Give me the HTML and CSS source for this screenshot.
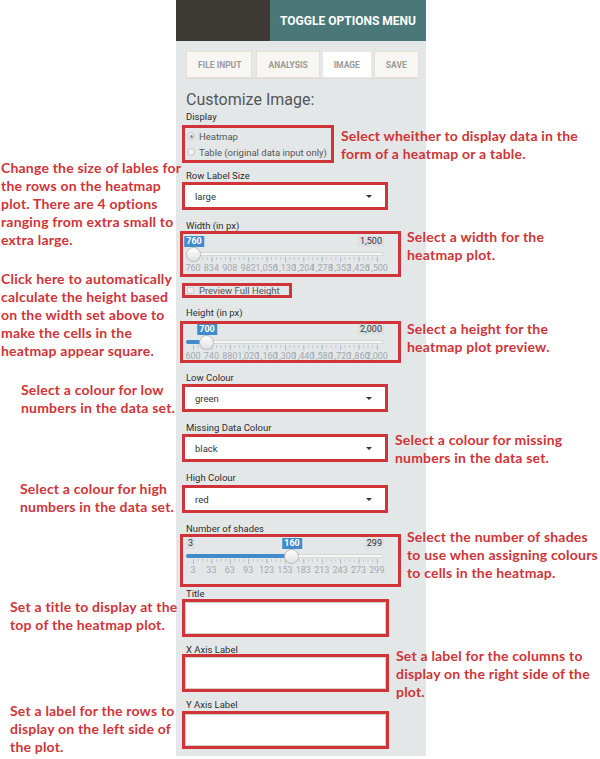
FILE: index.html
```html
<!DOCTYPE html>
<html>
<head>
<meta charset="utf-8">
<link rel="stylesheet" href="styles.css">
</head>
<body>
<div class="page">
  <div class="panel">
    <div class="topbar">
      <div class="topbar-dark"></div>
      <div class="topbar-toggle">TOGGLE OPTIONS MENU</div>
    </div>
    <div class="content">
      <div class="tabs">
        <div class="tab tab-first">FILE INPUT</div>
        <div class="tab">ANALYSIS</div>
        <div class="tab active">IMAGE</div>
        <div class="tab">SAVE</div>
      </div>
      <h2 class="heading">Customize Image:</h2>

      <div class="label lbl-display">Display</div>
      <div class="mark radios">
        <div class="radio-row"><span class="radio checked"></span>Heatmap</div>
        <div class="radio-row"><span class="radio"></span>Table (original data input only)</div>
      </div>

      <div class="label lbl-row">Row Label Size</div>
      <div class="mark select-wrap sel-row"><div class="select">large<span class="caret"></span></div></div>

      <div class="label lbl-width">Width (in px)</div>
      <div class="mark slider-box box-width">
        <div class="slider">
          <div class="tips">
            <span class="tip tip-max">1,500</span>
            <span class="tip tip-cur" style="left:8px">760</span>
          </div>
          <div class="rail">
            <div class="line"></div>
            <div class="handle" style="left:7px"></div>
          </div>
          <div class="ticks"></div>
          <div class="nums"><span>760</span><span>834</span><span>908</span><span>982</span><span>1,056</span><span>1,130</span><span>1,204</span><span>1,278</span><span>1,352</span><span>1,426</span><span>1,500</span></div>
        </div>
      </div>

      <div class="mark check-wrap"><span class="checkbox"></span>Preview Full Height</div>

      <div class="label lbl-height">Height (in px)</div>
      <div class="mark slider-box box-height">
        <div class="slider slider-short">
          <div class="tips">
            <span class="tip tip-max">2,000</span>
            <span class="tip tip-cur" style="left:21px">700</span>
          </div>
          <div class="rail">
            <div class="line"></div>
            <div class="fill" style="width:20px"></div>
            <div class="handle" style="left:20px"></div>
          </div>
          <div class="ticks"></div>
          <div class="nums"><span>600</span><span>740</span><span>880</span><span>1,020</span><span>1,160</span><span>1,300</span><span>1,440</span><span>1,580</span><span>1,720</span><span>1,860</span><span>2,000</span></div>
        </div>
      </div>

      <div class="label lbl-low">Low Colour</div>
      <div class="mark select-wrap sel-low"><div class="select">green<span class="caret"></span></div></div>

      <div class="label lbl-missing">Missing Data Colour</div>
      <div class="mark select-wrap sel-missing"><div class="select">black<span class="caret"></span></div></div>

      <div class="label lbl-high">High Colour</div>
      <div class="mark select-wrap sel-high"><div class="select">red<span class="caret"></span></div></div>

      <div class="label lbl-shades">Number of shades</div>
      <div class="mark slider-box box-shades">
        <div class="slider">
          <div class="tips">
            <span class="tip tip-min">3</span>
            <span class="tip tip-max">299</span>
            <span class="tip tip-cur" style="left:106px">160</span>
          </div>
          <div class="rail">
            <div class="line"></div>
            <div class="fill" style="width:105px"></div>
            <div class="handle" style="left:105px"></div>
          </div>
          <div class="ticks"></div>
          <div class="nums"><span>3</span><span>33</span><span>63</span><span>93</span><span>123</span><span>153</span><span>183</span><span>213</span><span>243</span><span>273</span><span>299</span></div>
        </div>
      </div>

      <div class="label lbl-title">Title</div>
      <div class="mark input-wrap"><div class="input"></div></div>

      <div class="label lbl-x">X Axis Label</div>
      <div class="mark input-wrap inp-x"><div class="input"></div></div>

      <div class="label lbl-y">Y Axis Label</div>
      <div class="mark input-wrap inp-y"><div class="input"></div></div>
    </div>
  </div>

  <div class="note n-display">Select wheither to display data in the<br>form of a heatmap or a table.</div>
  <div class="note n-rowsize">Change the size of lables for<br>the rows on the heatmap<br>plot. There are 4 options<br>ranging from extra small to<br>extra large.</div>
  <div class="note n-preview">Click here to automatically<br>calculate the height based<br>on the width set above to<br>make the cells in the<br>heatmap appear square.</div>
  <div class="note n-width">Select a width for the<br>heatmap plot.</div>
  <div class="note n-height">Select a height for the<br>heatmap plot preview.</div>
  <div class="note n-low">Select a colour for low<br>numbers in the data set.</div>
  <div class="note n-missing">Select a colour for missing<br>numbers in the data set.</div>
  <div class="note n-high">Select a colour for high<br>numbers in the data set.</div>
  <div class="note n-shades">Select the number of shades<br>to use when assigning colours<br>to cells in the heatmap.</div>
  <div class="note n-title">Set a title to display at the<br>top of the heatmap plot.</div>
  <div class="note n-xaxis">Set a label for the columns to<br>display on the right side of the<br>plot.</div>
  <div class="note n-yaxis">Set a label for the rows to<br>display on the left side of<br>the plot.</div>
</div>
</body>
</html>
```
FILE: styles.css
```css
* { box-sizing: border-box; }
body { margin: 0; font-family: Roboto, "Liberation Sans", sans-serif; background: #fff; }
.page { position: relative; width: 600px; height: 759px; overflow: hidden; }

.panel { margin-left: 176px; width: 250px; height: 756px; background: #e4e7e8; }
.topbar { display: flex; height: 41px; }
.topbar-dark { width: 94px; background: #3b3a35; }
.topbar-toggle { flex: 1; background: #4a7879; color: #fff; font-weight: 700; font-size: 12px; display: flex; align-items: center; justify-content: center; white-space: nowrap; }

.content { padding: 10px 11px 0 10px; }

.tabs { display: flex; height: 28px; border-bottom: 1px solid #dcdcdc; margin-right: -3px; }
.tab { height: 27px; padding: 0 11px; margin-right: 2px; background: #f8f6f2; border: 1px solid #e6dfd2; color: #9a9a9a; font-size: 8.5px; font-weight: 700; display: flex; align-items: center; white-space: nowrap; flex-shrink: 0; }
.tab-first { margin-right: 4px; padding: 0 10px 0 11px; }
.tab.active { background: #fff; border-color: #ece8e0; }

.heading { font-size: 16px; line-height: 20px; color: #555; font-weight: 400; margin: 11px 0 0; }

.label { font-size: 9.5px; line-height: 10px; font-weight: 400; color: #2e2e2e; white-space: nowrap; }
.lbl-display { margin-top: 2px; }
.lbl-row { margin-top: 8px; }
.lbl-width { margin-top: 11px; }
.lbl-height { margin-top: 10px; }
.lbl-low { margin-top: 10px; }
.lbl-missing { margin-top: 11px; }
.lbl-high { margin-top: 11px; }
.lbl-shades { margin-top: 11px; }
.lbl-title { margin-top: 2px; }
.lbl-x { margin-top: 8px; }
.lbl-y { margin-top: 8px; }

.mark { border: 3px solid #cf3438; }

.radios { margin: 3px 0 0 -4px; width: 152px; height: 38px; padding-left: 2px; }
.radio-row { height: 16px; display: flex; align-items: center; gap: 4px; font-size: 9.5px; color: #555; white-space: nowrap; }
.radio { width: 8px; height: 8px; border-radius: 50%; border: 1px solid #c4c4c4; background: #f2f2f2; display: flex; align-items: center; justify-content: center; }
.radio.checked::after { content: ""; width: 3px; height: 3px; border-radius: 50%; background: #888; }

.select-wrap { margin: 1px 0 0 -4px; width: 206px; height: 28px; }
.sel-high { margin-top: 2px; }
.select { height: 100%; background: #fff; display: flex; align-items: center; justify-content: space-between; padding: 0 13px 0 10px; font-size: 9.5px; color: #333; }
.caret { width: 0; height: 0; border-left: 3px solid transparent; border-right: 3px solid transparent; border-top: 3px solid #333; }

.input-wrap { margin-left: -4px; width: 207px; height: 38px; }
.inp-x { margin-top: -1px; }
.inp-y { margin-top: 1px; }
.input { height: 100%; background: #fff; border: 1px solid #d6d0c6; }

.check-wrap { margin: 6px 0 0 -4px; width: 110px; height: 15px; display: flex; align-items: center; padding-left: 2px; gap: 5px; font-size: 9.5px; color: #555; white-space: nowrap; }
.checkbox { width: 7px; height: 7px; border: 1px solid #cfcfcf; background: #efefef; }

.slider-box { margin-left: -6px; width: 221px; padding-left: 3px; }
.box-width { padding-top: 2px; }
.box-height { margin-top: 3px; }
.box-shades { padding-top: 1px; padding-bottom: 8px; }
.slider { width: 198px; height: 38px; }
.slider-short { margin-bottom: -2px; }

.tips { position: relative; height: 11px; }
.tip { position: absolute; top: 0; height: 11px; line-height: 11px; font-size: 9px; padding: 0 2px; background: #dcdfe3; color: #333; white-space: nowrap; }
.tip-min { left: 0; }
.tip-max { right: 0; }
.tip-cur { transform: translateX(-50%); background: #428bca; color: #fff; font-weight: 700; }

.rail { position: relative; height: 10px; }
.line { position: absolute; left: 0; right: 0; top: 5px; height: 4px; background: #f6f6f6; border: 1px solid #d6d6d6; border-radius: 3px; }
.fill { position: absolute; left: 0; top: 5px; height: 4px; background: #428bca; border-radius: 2px 0 0 2px; }
.handle { position: absolute; top: 0; width: 15px; height: 15px; margin-left: -7px; border-radius: 50%; background: linear-gradient(#fdfdfd, #e2e2e2); border: 1px solid #b9b9b9; }

.ticks { height: 6px; margin: 0 6px 0 7px; background-image: linear-gradient(to right, #9dbfe0 1px, transparent 1px), linear-gradient(to right, #c4c4c4 1px, transparent 1px); background-size: 18.4px 5px, 4.6px 3px; background-repeat: repeat-x; background-position: 0 0, 0 0; }
.nums { display: flex; justify-content: space-between; margin: 0 7px; height: 11px; line-height: 11px; font-size: 9px; color: #a3a9af; }
.nums span { width: 0; display: flex; justify-content: center; white-space: nowrap; }

.note { position: absolute; font-family: Lato, "Open Sans", sans-serif; font-weight: 700; font-size: 14px; letter-spacing: 0.2px; line-height: 18px; color: #cf3438; white-space: nowrap; }
.n-display { left: 341px; top: 127px; }
.n-rowsize { left: 1px; top: 159px; }
.n-preview { left: 1px; top: 270px; }
.n-width { left: 407px; top: 228px; }
.n-height { left: 407px; top: 320px; }
.n-low { left: 21px; top: 381px; }
.n-missing { left: 395px; top: 431px; }
.n-high { left: 20px; top: 480px; }
.n-shades { left: 407px; top: 528px; }
.n-title { left: 10px; top: 598px; }
.n-xaxis { left: 396px; top: 647px; }
.n-yaxis { left: 10px; top: 702px; }
```
